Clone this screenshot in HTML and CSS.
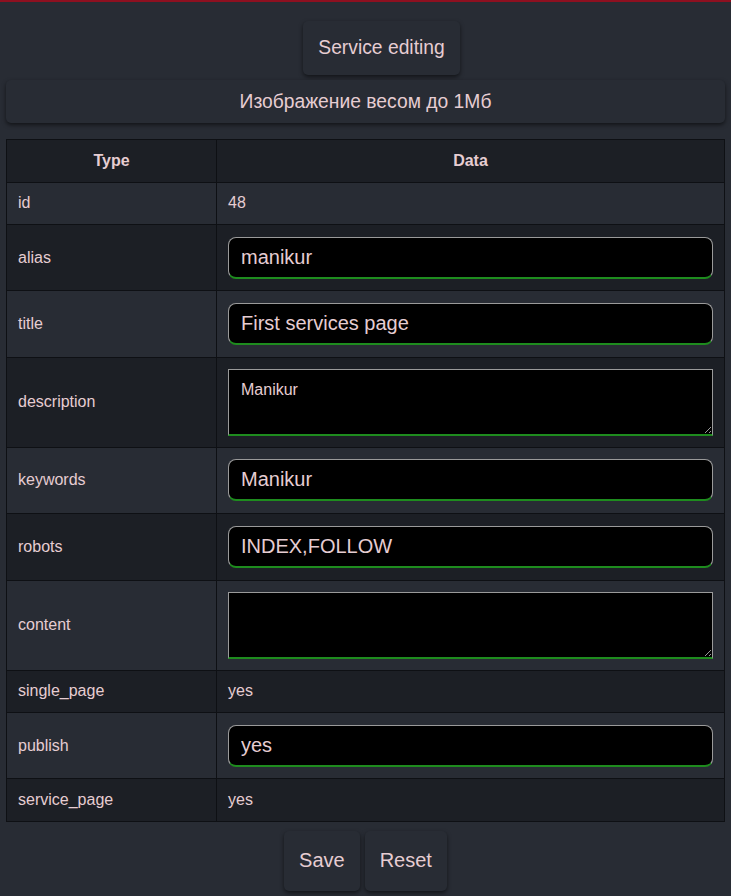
FILE: index.html
```html
<!DOCTYPE html>
<html lang="ru">
<head>
<meta charset="utf-8">
<title>Service editing</title>
<link rel="stylesheet" href="styles.css">
</head>
<body>
<div class="page">
  <div class="top">
    <button class="btn title-btn">Service editing</button>
  </div>
  <button class="bar">Изображение весом до 1Мб</button>
  <table class="grid">
    <thead>
      <tr class="head"><th class="c1">Type</th><th class="c2">Data</th></tr>
    </thead>
    <tbody>
      <tr class="light txt"><td>id</td><td>48</td></tr>
      <tr class="dark inp"><td>alias</td><td><input class="field" value="manikur"></td></tr>
      <tr class="light inp"><td>title</td><td><input class="field" value="First services page"></td></tr>
      <tr class="dark ta"><td>description</td><td><textarea class="area">Manikur</textarea></td></tr>
      <tr class="light inp"><td>keywords</td><td><input class="field" value="Manikur"></td></tr>
      <tr class="dark inp"><td>robots</td><td><input class="field" value="INDEX,FOLLOW"></td></tr>
      <tr class="light ta"><td>content</td><td><textarea class="area"></textarea></td></tr>
      <tr class="dark txt"><td>single_page</td><td>yes</td></tr>
      <tr class="light inp"><td>publish</td><td><input class="field" value="yes"></td></tr>
      <tr class="dark txt"><td>service_page</td><td>yes</td></tr>
    </tbody>
  </table>
  <div class="actions">
    <button class="btn act">Save</button>
    <button class="btn act">Reset</button>
  </div>
</div>
</body>
</html>
```
FILE: styles.css
```css
html, body {
  margin: 0;
  padding: 0;
  background: #282c34;
}
body {
  border-top: 2px solid #8e1020;
  font-family: "Liberation Sans", Arial, sans-serif;
  color: #e6cdd2;
  min-height: 894px;
}
.page {
  padding: 0 6px;
  display: flex;
  flex-direction: column;
}
.top {
  display: flex;
  justify-content: center;
  padding-top: 19px;
}
.btn {
  font-family: "Liberation Sans", Arial, sans-serif;
  color: #e6cdd2;
  background: #282c34;
  border: none;
  border-radius: 5px;
  box-shadow: 0 2px 4px rgba(0, 0, 0, 0.55);
  cursor: pointer;
}
.title-btn {
  width: 157px;
  height: 54px;
  margin-left: 32px;
  font-size: 19.3px;
}
.bar {
  margin-top: 5px;
  height: 43px;
  width: 100%;
  font-family: "Liberation Sans", Arial, sans-serif;
  font-size: 19.3px;
  color: #e6cdd2;
  background: #282c34;
  border: none;
  border-radius: 5px;
  box-shadow: 0 2px 4px rgba(0, 0, 0, 0.55);
}
.grid {
  margin-top: 16px;
  width: 100%;
  border-collapse: collapse;
  border: 1px solid #0e1014;
  font-size: 16px;
}
.grid th, .grid td {
  border: 1px solid #0e1014;
  padding: 0 11px;
  text-align: left;
}
.grid th {
  text-align: center;
  height: 41.5px;
  font-weight: bold;
  background: #1c1f25;
}
.grid .c1 { width: 187px; }
.head { background: #1c1f25; }
.light { background: #282c34; }
.dark { background: #1c1f25; }
.txt td { height: 41.5px; }
.inp td { height: 65.4px; }
.ta td { height: 89px; }
.field {
  display: block;
  box-sizing: border-box;
  width: 100%;
  height: 42px;
  background: #000;
  color: #e6cdd2;
  font-family: "Liberation Sans", Arial, sans-serif;
  font-size: 20px;
  padding: 0 12px;
  border: 1px solid #9a9a9a;
  border-bottom: 2px solid #1e8c1e;
  border-radius: 8px;
  outline: none;
}
.area {
  display: block;
  box-sizing: border-box;
  width: 100%;
  height: 67px;
  background: #000;
  color: #e6cdd2;
  font-family: "Liberation Sans", Arial, sans-serif;
  font-size: 16px;
  padding: 11px 12px;
  border: 1px solid #9a9a9a;
  border-bottom: 2px solid #1e8c1e;
  border-radius: 0;
  outline: none;
  resize: vertical;
}
.actions {
  display: flex;
  justify-content: center;
  gap: 5px;
  margin-top: 9px;
}
.act {
  height: 60px;
  font-size: 20px;
  padding: 0 15px;
}
```
